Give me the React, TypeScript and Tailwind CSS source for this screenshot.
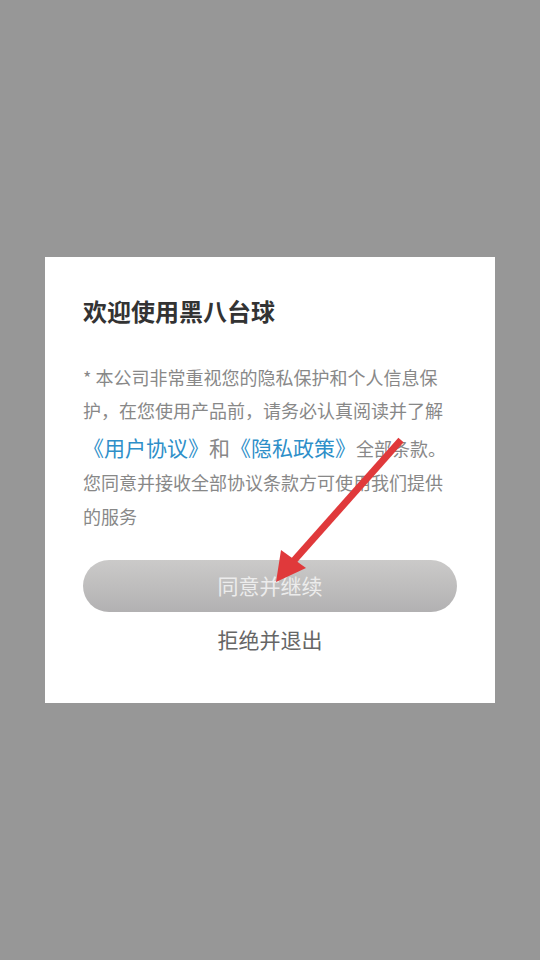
import React from "react";

export default function App() {
  const font = '"Noto Sans CJK SC", "Noto Sans", sans-serif';
  return (
    <div
      className="relative w-[540px] h-[960px] bg-[#979797] flex items-center justify-center overflow-hidden"
      style={{ fontFamily: font }}
    >
      <div className="w-[450px] bg-white px-[38px] pt-[38px] pb-[50px] flex flex-col">
        <h1 className="text-[24px] leading-[32px] font-bold text-[#333333]">欢迎使用黑八台球</h1>
        <p className="mt-[34px] text-[18px] leading-[1.85] text-[#888888]">
          * 本公司非常重视您的隐私保护和个人信息保
          <br />
          护，在您使用产品前，请务必认真阅读并了解
          <br />
          <span className="text-[21px] text-[#2e8fc9]">《用户协议》</span>
          <span className="text-[21px] text-[#888888]">和</span>
          <span className="text-[21px] text-[#2e8fc9]">《隐私政策》</span>
          全部条款。
          <br />
          您同意并接收全部协议条款方可使用我们提供
          <br />
          的服务
        </p>
        <button className="mt-[27px] h-[52px] w-full rounded-full bg-gradient-to-b from-[#cbcac9] to-[#b2b1b2] text-[21px] text-[#ececec] flex items-center justify-center">
          同意并继续
        </button>
        <div className="mt-[13px] text-[21px] leading-[28px] text-[#666666] text-center">拒绝并退出</div>
      </div>
      <svg className="absolute left-0 top-0" width="540" height="960" viewBox="0 0 540 960">
        <line x1="401" y1="440" x2="290" y2="565" stroke="#e0393b" strokeWidth="7" strokeLinecap="butt" />
        <polygon points="276,582 281,550 306,568" fill="#e0393b" />
      </svg>
    </div>
  );
}
